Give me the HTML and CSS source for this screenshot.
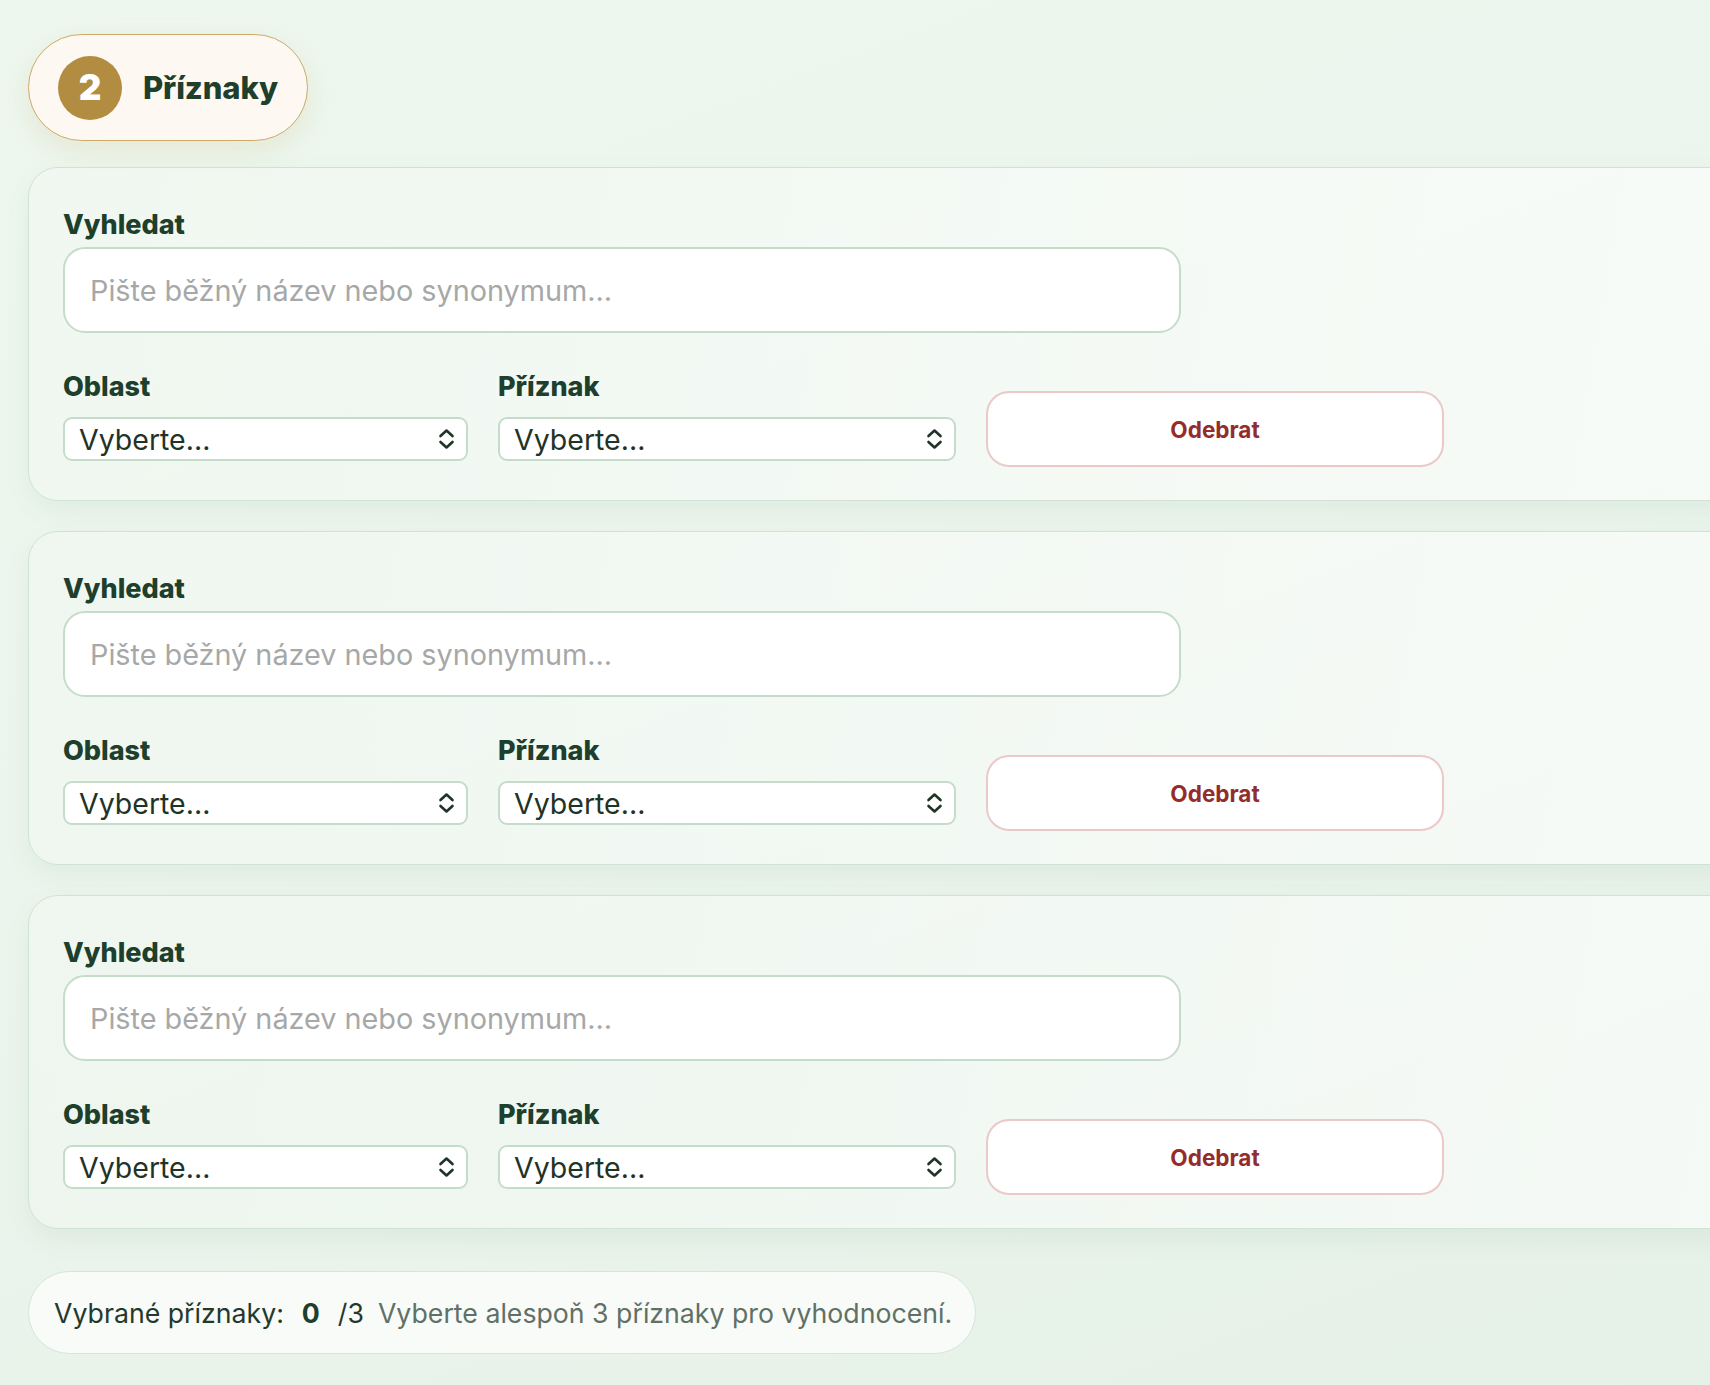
FILE: index.html
```html
<!DOCTYPE html>
<html lang="cs">
<head>
<meta charset="utf-8">
<title>Příznaky</title>
<link rel="stylesheet" href="styles.css">
</head>
<body>
<main class="page">
  <div class="step-badge">
    <span class="step-num">2</span>
    <span class="step-title">Příznaky</span>
  </div>

  <section class="symptom-list">
    <div class="symptom-card">
      <label class="field-label" for="q1">Vyhledat</label>
      <input class="search-input" id="q1" type="text" placeholder="Pište běžný název nebo synonymum...">
      <div class="field-row">
        <div class="field field-area">
          <label class="field-label" for="a1">Oblast</label>
          <div class="select-wrap">
            <select class="select" id="a1"><option>Vyberte...</option></select>
            <svg class="chevrons" viewBox="0 0 17 22" aria-hidden="true"><path d="M2.5 8 8.5 2.5 14.5 8M2.5 14 8.5 19.5 14.5 14"/></svg>
          </div>
        </div>
        <div class="field field-symptom">
          <label class="field-label" for="s1">Příznak</label>
          <div class="select-wrap">
            <select class="select" id="s1"><option>Vyberte...</option></select>
            <svg class="chevrons" viewBox="0 0 17 22" aria-hidden="true"><path d="M2.5 8 8.5 2.5 14.5 8M2.5 14 8.5 19.5 14.5 14"/></svg>
          </div>
        </div>
        <button class="remove-btn" type="button">Odebrat</button>
      </div>
    </div>

    <div class="symptom-card">
      <label class="field-label" for="q2">Vyhledat</label>
      <input class="search-input" id="q2" type="text" placeholder="Pište běžný název nebo synonymum...">
      <div class="field-row">
        <div class="field field-area">
          <label class="field-label" for="a2">Oblast</label>
          <div class="select-wrap">
            <select class="select" id="a2"><option>Vyberte...</option></select>
            <svg class="chevrons" viewBox="0 0 17 22" aria-hidden="true"><path d="M2.5 8 8.5 2.5 14.5 8M2.5 14 8.5 19.5 14.5 14"/></svg>
          </div>
        </div>
        <div class="field field-symptom">
          <label class="field-label" for="s2">Příznak</label>
          <div class="select-wrap">
            <select class="select" id="s2"><option>Vyberte...</option></select>
            <svg class="chevrons" viewBox="0 0 17 22" aria-hidden="true"><path d="M2.5 8 8.5 2.5 14.5 8M2.5 14 8.5 19.5 14.5 14"/></svg>
          </div>
        </div>
        <button class="remove-btn" type="button">Odebrat</button>
      </div>
    </div>

    <div class="symptom-card">
      <label class="field-label" for="q3">Vyhledat</label>
      <input class="search-input" id="q3" type="text" placeholder="Pište běžný název nebo synonymum...">
      <div class="field-row">
        <div class="field field-area">
          <label class="field-label" for="a3">Oblast</label>
          <div class="select-wrap">
            <select class="select" id="a3"><option>Vyberte...</option></select>
            <svg class="chevrons" viewBox="0 0 17 22" aria-hidden="true"><path d="M2.5 8 8.5 2.5 14.5 8M2.5 14 8.5 19.5 14.5 14"/></svg>
          </div>
        </div>
        <div class="field field-symptom">
          <label class="field-label" for="s3">Příznak</label>
          <div class="select-wrap">
            <select class="select" id="s3"><option>Vyberte...</option></select>
            <svg class="chevrons" viewBox="0 0 17 22" aria-hidden="true"><path d="M2.5 8 8.5 2.5 14.5 8M2.5 14 8.5 19.5 14.5 14"/></svg>
          </div>
        </div>
        <button class="remove-btn" type="button">Odebrat</button>
      </div>
    </div>
  </section>

  <div class="summary">
    <span class="summary-label">Vybrané příznaky:</span>
    <strong class="summary-count">0</strong>
    <span class="summary-total">/3</span>
    <span class="summary-hint">Vyberte alespoň 3 příznaky pro vyhodnocení.</span>
  </div>
</main>
</body>
</html>
```

FILE: styles.css
```css
html, body {
  margin: 0;
  padding: 0;
  overflow: hidden;
}

body {
  min-height: 1385px;
  background: linear-gradient(160deg, #edf7ee 0%, #ecf5ed 45%, #e6f1e8 100%);
  font-family: "Inter", "Noto Sans", "Liberation Sans", sans-serif;
  color: #1f3a2b;
}

.page {
  padding: 34px 0 0 28px;
  display: flex;
  flex-direction: column;
  align-items: flex-start;
}

/* step heading pill */
.step-badge {
  display: flex;
  align-items: center;
  gap: 21px;
  box-sizing: border-box;
  height: 107px;
  padding: 0 29px 0 29px;
  background: #fdf9f2;
  border: 1.5px solid #cda96a;
  border-radius: 54px;
  box-shadow: 0 10px 28px rgba(190, 160, 90, 0.16);
}

.step-num {
  width: 64px;
  height: 64px;
  border-radius: 50%;
  background: #b28c40;
  color: #fff;
  display: flex;
  align-items: center;
  justify-content: center;
  font-size: 35px;
  font-weight: 900;
  line-height: 1;
}

.step-title {
  font-size: 31px;
  font-weight: 800;
  color: #1d3f2b;
  letter-spacing: -0.1px;
}

/* symptom cards */
.symptom-list {
  margin-top: 26px;
  display: flex;
  flex-direction: column;
  gap: 30px;
}

.symptom-card {
  box-sizing: border-box;
  width: 1740px;
  height: 334px;
  padding: 41px 0 0 34px;
  border: 1.5px solid #cfe3d5;
  border-radius: 30px;
  background: linear-gradient(100deg, rgba(255, 255, 255, 0.16) 0%, rgba(255, 255, 255, 0.42) 60%, rgba(255, 255, 255, 0.6) 100%);
  box-shadow: 0 10px 26px rgba(60, 120, 80, 0.07);
  display: flex;
  flex-direction: column;
  align-items: flex-start;
}

.field-label {
  display: block;
  font-size: 27px;
  line-height: 31px;
  font-weight: 800;
  color: #1d3f2b;
}

.search-input {
  box-sizing: border-box;
  width: 1118px;
  height: 86px;
  margin-top: 7px;
  padding: 0 25px;
  border: 2px solid #c6dccb;
  border-radius: 22px;
  background: #fff;
  font-family: inherit;
  font-size: 28.8px;
  color: #1f3a2b;
  outline: none;
}

.search-input::placeholder {
  color: #a6a8a7;
}

.field-row {
  margin-top: 38px;
  display: flex;
  align-items: flex-start;
  gap: 30px;
}

.field {
  display: flex;
  flex-direction: column;
}

.field-area { width: 405px; }
.field-symptom { width: 458px; }

.select-wrap {
  position: relative;
  margin-top: 15px;
}

.select {
  -webkit-appearance: none;
  appearance: none;
  box-sizing: border-box;
  width: 100%;
  height: 44px;
  padding: 0 40px 0 14px;
  border: 2px solid #c6dccb;
  border-radius: 9px;
  background: #fff;
  font-family: inherit;
  font-size: 28.5px;
  color: #1f3326;
  outline: none;
}

.chevrons {
  position: absolute;
  right: 13px;
  top: 11px;
  width: 17px;
  height: 22px;
  fill: none;
  stroke: #1f3326;
  stroke-width: 2.6;
  stroke-linecap: round;
  stroke-linejoin: round;
  pointer-events: none;
}

.remove-btn {
  box-sizing: border-box;
  width: 458px;
  height: 76px;
  margin-top: 20px;
  border: 2px solid #ebc9c9;
  border-radius: 23px;
  background: #fff;
  font-family: inherit;
  font-size: 22.5px;
  font-weight: 700;
  color: #932d2b;
  cursor: pointer;
}

/* selection summary */
.summary {
  margin-top: 42px;
  box-sizing: border-box;
  height: 83px;
  padding: 0 23px 0 25px;
  display: flex;
  align-items: center;
  gap: 14px;
  background: #f8fbf8;
  border: 1.5px solid #d3e6d9;
  border-radius: 42px;
  font-size: 26.7px;
  color: #24382c;
}

.summary-count {
  font-weight: 700;
  color: #1d3f2b;
  margin: 0 4px;
}

.summary-hint {
  color: #5f7166;
}
```
